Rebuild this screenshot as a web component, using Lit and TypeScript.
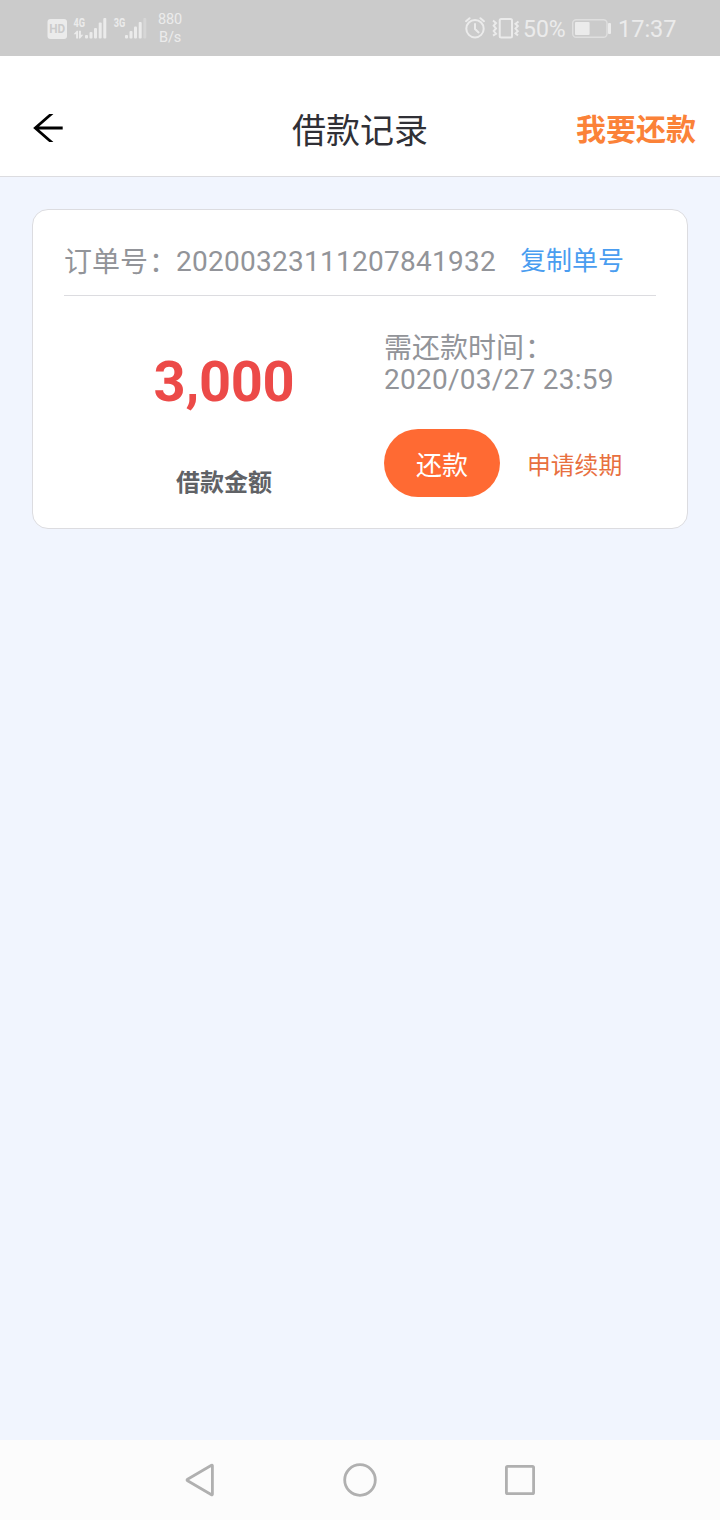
import { LitElement, html, css } from "lit";
import { customElement, property } from "lit/decorators.js";

@customElement("status-bar")
class StatusBar extends LitElement {
  static styles = css`
    :host { display: flex; box-sizing: border-box; height: 56px; padding: 0 44px 0 46px;
      justify-content: space-between; background: #cbcbcb; color: #ebebeb; }
    .side { display: flex; align-items: center; height: 56px; }
    svg { display: block; flex: none; }
    .rate { display: flex; flex-direction: column; align-items: center; margin-left: 8px; padding-top: 2px;
      font-size: 14.5px; letter-spacing: -.2px; line-height: 18px; width: 28px; }
    .text { font-size: 24px; line-height: 30px; padding-top: 2px; white-space: nowrap; }
    .percent { width: 42px; margin-left: 3px; padding-top: 3px; font-size: 23px; }
    .battery { margin-left: 7px; }
    .clock { margin-left: 6px; width: 58px; font-size: 23.5px; }
    .tag { font: bold 12.5px "Roboto", sans-serif; }
    .hd { font: bold 12px "Roboto", sans-serif; }
  `;
  render() {
    return html`
      <div class="side">
        <svg width="102" height="56" viewBox="0 0 102 56" fill="#ebebeb">
          <rect x="1.5" y="19" width="19.5" height="20" rx="3" />
          <text class="hd" x="3.2" y="33.3" fill="#cbcbcb" textLength="16" lengthAdjust="spacingAndGlyphs">HD</text>
          <text class="tag" x="27.5" y="27" textLength="11.5" lengthAdjust="spacingAndGlyphs">4G</text>
          <path d="M27.6 34.2l3.2-3.4h1.3v7.6h-2v-4.2zM33 30.8h1.9v4h2.4l-3.2 3.6H33z" />
          <rect x="39" y="35" width="3" height="3.5" rx="1" />
          <rect x="43.5" y="32" width="3" height="6.5" rx="1" />
          <rect x="48" y="28" width="3" height="10.5" rx="1" />
          <rect x="52.7" y="22.5" width="3" height="16" rx="1" />
          <rect x="57.3" y="18" width="3" height="20.5" rx="1" />
          <text class="tag" x="67.7" y="27" textLength="11.5" lengthAdjust="spacingAndGlyphs">3G</text>
          <rect x="79" y="35" width="3" height="3.5" rx="1" />
          <rect x="83.5" y="31" width="3" height="7.5" rx="1" />
          <rect x="88" y="26.5" width="3" height="12" rx="1" />
          <rect x="92.7" y="22" width="3" height="16.5" rx="1" />
          <rect x="97.3" y="18" width="3" height="20.5" rx="1" opacity=".35" />
        </svg>
        <div class="rate"><span>880</span><span>B/s</span></div>
      </div>
      <div class="side">
        <svg width="56" height="56" viewBox="0 0 56 56" fill="none" stroke="#ebebeb" stroke-width="2">
          <circle cx="11" cy="28.7" r="8.7" />
          <path d="M11 24v5l3.6 3.4M2 21.2l3.6-3M16.4 18.2l3.6 3" stroke-linecap="round" />
          <rect x="35.7" y="19" width="12.3" height="18.5" rx="1.5" />
          <path d="M29 20.5l3 2.5-2.3 2.7 2.3 2.7-2.3 2.7 2.3 2.6-3 2M54.5 21.5l-3 2.3 2.3 2.3-2.3 2.5 2.3 2.5-2.3 2.3 2.5 2" />
        </svg>
        <span class="text percent">50%</span>
        <svg class="battery" width="40" height="56" viewBox="0 0 40 56" fill="none">
          <rect x=".7" y="19.7" width="34.3" height="17.5" rx="3.5" stroke="#dfdfdf" stroke-width="1.4" />
          <rect x="3" y="22" width="14.6" height="13" rx="1" fill="#ebebeb" />
          <rect x="36" y="23" width="3" height="11" rx="1" fill="#ebebeb" />
        </svg>
        <span class="text clock">17:37</span>
      </div>`;
  }
}

@customElement("title-bar")
class TitleBar extends LitElement {
  @property() heading = "";
  @property() action = "";
  static styles = css`
    :host { display: grid; grid-template-columns: 120px 1fr 120px; align-items: center; box-sizing: border-box;
      height: 121px; padding: 24px 24px 0; background: #fff; border-bottom: 1px solid #dcdce0; }
    .back { display: block; margin-left: 8px; }
    .heading { justify-self: center; padding-top: 5px; font-size: 34px; line-height: 48px; color: #303036; }
    .action { padding-top: 3px; font-size: 30px; line-height: 48px; font-weight: 700; color: #fb8238; white-space: nowrap; }
  `;
  render() {
    return html`
      <svg class="back" width="32" height="28" viewBox="0 1 32 28" fill="none" stroke="#000" stroke-width="2.8">
        <path d="M30.7 15H3M20.5 0L3.3 15 20.5 30" />
      </svg>
      <span class="heading">${this.heading}</span>
      <span class="action">${this.action}</span>`;
  }
}

@customElement("loan-card")
class LoanCard extends LitElement {
  @property() order = "";
  @property() amount = "";
  @property() due = "";
  static styles = css`
    :host { display: block; box-sizing: border-box; height: 320px; padding: 0 31px;
      background: #fff; border: 1px solid #dcdce0; border-radius: 16px; }
    .order { display: flex; align-items: center; box-sizing: border-box; height: 86px; padding-top: 19px;
      border-bottom: 1px solid #dcdce0; color: #929499; font-size: 28px; line-height: 34px; white-space: nowrap; }
    .name { padding-top: 2px; }
    .number { letter-spacing: .26px; }
    .colon { display: inline-block; box-sizing: border-box; width: 28px; padding-left: 1px; line-height: 28px; }
    .copy { margin: 0 0 2px 24px; font-size: 26px; color: #4a9df0; }
    .body { display: grid; grid-template-columns: 320px 1fr; }
    .sum { display: flex; flex-direction: column; align-items: center; padding-top: 53px; }
    .amount { font-size: 56px; letter-spacing: -.3px; line-height: 66px; font-weight: 700; color: #ec4a48; }
    .label { margin-top: 51px; font-size: 24px; line-height: 34px; font-weight: 700; color: #606266; }
    .due { padding-top: 37px; font-size: 28px; line-height: 31px; color: #929499; white-space: nowrap; }
    .caption { height: 31px; }
    .date { letter-spacing: .26px; }
    .actions { display: flex; align-items: center; margin-top: 34px; }
    .pay { box-sizing: border-box; width: 116px; height: 68px; border: 0; padding: 5px 0 0; border-radius: 34px;
      background: #ff6a33; color: #fff; font: inherit; font-size: 26px; line-height: 34px; }
    .extend { margin-left: 27px; padding-top: 6px; font-size: 23.8px; line-height: 34px; color: #e8703f; }
  `;
  render() {
    return html`
      <div class="order">
        <span class="name">订单号<span class="colon">：</span></span><span class="number">${this.order}</span><span class="copy">复制单号</span>
      </div>
      <div class="body">
        <div class="sum">
          <span class="amount">${this.amount}</span>
          <span class="label">借款金额</span>
        </div>
        <div>
          <div class="due">
            <div class="caption">需还款时间<span class="colon">：</span></div>
            <div class="date">${this.due}</div>
          </div>
          <div class="actions">
            <button class="pay">还款</button>
            <span class="extend">申请续期</span>
          </div>
        </div>
      </div>`;
  }
}

@customElement("nav-bar")
class NavBar extends LitElement {
  static styles = css`
    :host { display: flex; justify-content: center; align-items: center; gap: 120px; height: 80px; background: #fcfcfc; }
    svg { display: block; width: 40px; height: 40px; fill: none; stroke: #b0b0b0; stroke-width: 2.8; stroke-linejoin: round; }
  `;
  render() {
    return html`
      <svg viewBox="0 0 40 40"><path d="M32.4 5.8q0-1-.9-.5L7.6 19.2q-1.2.8 0 1.6l23.9 13.9q.9.5.9-.5z" /></svg>
      <svg viewBox="0 0 40 40"><circle cx="20" cy="20" r="15.3" /></svg>
      <svg viewBox="0 0 40 40"><rect x="6.4" y="6.4" width="27.2" height="27.2" rx="1.2" /></svg>`;
  }
}

@customElement("app-root")
class AppRoot extends LitElement {
  static styles = css`
    :host { display: flex; flex-direction: column; width: 720px; height: 1520px; background: #f1f5fe;
      font-family: "Roboto", "Noto Sans CJK SC", sans-serif; }
    .content { flex: 1; padding: 32px; }
  `;
  render() {
    return html`
      <status-bar></status-bar>
      <title-bar heading="借款记录" action="我要还款"></title-bar>
      <main class="content">
        <loan-card order="20200323111207841932" amount="3,000" due="2020/03/27 23:59"></loan-card>
      </main>
      <nav-bar></nav-bar>`;
  }
}
